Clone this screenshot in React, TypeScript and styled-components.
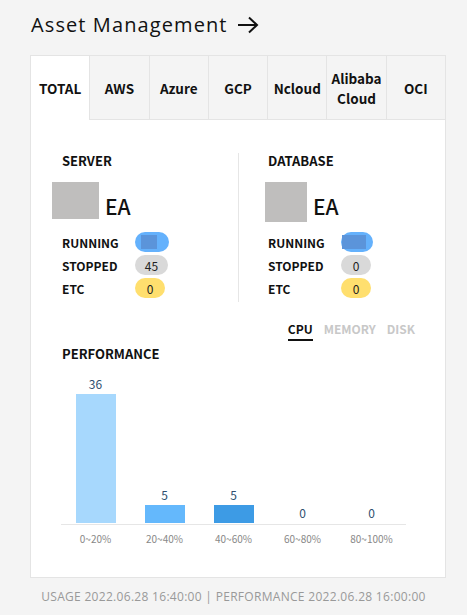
import React from "react";
import styled, { createGlobalStyle } from "styled-components";

const Global = createGlobalStyle`
  html, body { margin: 0; padding: 0; background: #f4f4f4; }
  body { font-family: "Noto Sans CJK KR", "Noto Sans", sans-serif; color: #111; }
  * { box-sizing: border-box; }
`;

const Page = styled.div`
  width: 467px;
  height: 615px;
  padding: 13px 21px 0 30px;
  background: #f4f4f4;
`;

const Title = styled.h1`
  margin: 0 0 18px 1px;
  height: 24px;
  display: flex;
  align-items: center;
  gap: 9px;
  font-family: "Open Sans", "Liberation Sans", sans-serif;
  font-weight: 400;
  font-size: 20px;
  line-height: 24px;
  color: #111;
  letter-spacing: 1.1px;
`;

const Card = styled.section`
  width: 416px;
  height: 523px;
  background: #fff;
  border: 1px solid #e4e4e4;
  display: flex;
  flex-direction: column;
`;

const TabBar = styled.div`
  display: flex;
  height: 64px;
  flex: none;
`;

const Tab = styled.div<{ $active?: boolean }>`
  flex: 1;
  display: flex;
  align-items: center;
  justify-content: center;
  text-align: center;
  font-weight: 700;
  font-size: 13.5px;
  line-height: 20px;
  color: #111;
  background: ${(p) => (p.$active ? "#fff" : "#f4f4f4")};
  border-bottom: ${(p) => (p.$active ? "1px solid transparent" : "1px solid #e4e4e4")};
  & + & {
    border-left: 1px solid #e4e4e4;
  }
`;

const Body = styled.div`
  padding: 33px 30px 0 31px;
  display: flex;
  flex-direction: column;
`;

const Summary = styled.div`
  display: grid;
  grid-template-columns: 176px 1fr;
  height: 149px;
`;

const Column = styled.div<{ $divided?: boolean }>`
  display: flex;
  flex-direction: column;
  padding-left: ${(p) => (p.$divided ? "29px" : "0")};
  border-left: ${(p) => (p.$divided ? "1px solid #e6e6e6" : "none")};
`;

const SectionLabel = styled.div`
  font-weight: 700;
  font-size: 13px;
  line-height: 16px;
  color: #111;
`;

const CountRow = styled.div`
  display: flex;
  align-items: flex-end;
  gap: 6px;
  margin-top: 13px;
  height: 40px;
`;

const Redacted = styled.div<{ $w: number; $h: number; $shift: number }>`
  width: ${(p) => p.$w}px;
  height: ${(p) => p.$h}px;
  margin-left: ${(p) => p.$shift}px;
  background: #bfbebd;
  align-self: flex-start;
`;

const EA = styled.span`
  font-size: 21px;
  font-weight: 500;
  line-height: 24px;
  color: #111;
  margin-bottom: 4px;
`;

const StatusList = styled.div`
  display: flex;
  flex-direction: column;
  gap: 3px;
  margin-top: 10px;
`;

const StatusRow = styled.div`
  display: flex;
  align-items: center;
  height: 20px;
`;

const StatusName = styled.span`
  width: 73px;
  font-weight: 700;
  font-size: 12px;
  color: #111;
`;

const Pill = styled.span<{ $tone: "blue" | "gray" | "yellow"; $w: number }>`
  width: ${(p) => p.$w}px;
  height: 20px;
  border-radius: 10px;
  display: inline-flex;
  align-items: center;
  justify-content: center;
  font-size: 12px;
  color: #222;
  background: ${(p) =>
    p.$tone === "blue" ? "#64b1fc" : p.$tone === "gray" ? "#d9d9d9" : "#ffdf6e"};
`;

const PillMask = styled.span<{ $w: number }>`
  width: ${(p) => p.$w}px;
  height: 14px;
  margin-right: 6px;
  background: #5b94da;
`;

const MetricTabs = styled.div`
  display: flex;
  justify-content: flex-end;
  gap: 11px;
  margin-top: 19px;
`;

const MetricTab = styled.span<{ $active?: boolean }>`
  font-weight: 700;
  font-size: 12px;
  line-height: 16px;
  padding-bottom: 2px;
  color: ${(p) => (p.$active ? "#111" : "#c8c8c8")};
  border-bottom: 2px solid ${(p) => (p.$active ? "#111" : "transparent")};
`;

const PerfLabel = styled(SectionLabel)`
  margin-top: 5px;
`;

const Chart = styled.div`
  margin: 14px 0 0 -1px;
  width: 345px;
  display: flex;
  flex-direction: column;
`;

const Plot = styled.div`
  display: grid;
  grid-template-columns: repeat(5, 1fr);
  align-items: end;
  border-bottom: 1px solid #e6e6e6;
  padding-bottom: 1px;
`;

const BarCol = styled.div`
  display: flex;
  flex-direction: column;
  align-items: center;
  gap: 2px;
`;

const BarValue = styled.span`
  font-size: 12px;
  line-height: 16px;
  color: #2f4f6f;
`;

const Bar = styled.div<{ $color: string }>`
  width: 40px;
  background: ${(p) => p.$color};
`;

const Axis = styled.div`
  display: grid;
  grid-template-columns: repeat(5, 1fr);
  margin-top: 6px;
`;

const AxisLabel = styled.span`
  text-align: center;
  font-size: 10px;
  line-height: 16px;
  color: #888;
`;

const Footer = styled.div`
  margin: 11px 0 0 -9px;
  width: 425px;
  text-align: center;
  font-family: "Open Sans", "Liberation Sans", sans-serif;
  font-size: 12px;
  line-height: 16px;
  letter-spacing: 0.3px;
  color: #999;
`;

const Arrow = () => (
  <svg width="22" height="18" viewBox="0 0 22 18" fill="none" stroke="#111" strokeWidth="2">
    <path d="M1 9h19M12 1.5L20 9l-8 7.5" />
  </svg>
);

const tabs = ["TOTAL", "AWS", "Azure", "GCP", "Ncloud", "Alibaba Cloud", "OCI"];

const bars = [
  { label: "0~20%", value: 36, color: "#a7d8fd" },
  { label: "20~40%", value: 5, color: "#64b8fc" },
  { label: "40~60%", value: 5, color: "#3d9be5" },
  { label: "60~80%", value: 0, color: "#3d9be5" },
  { label: "80~100%", value: 0, color: "#3d9be5" },
];

type Stat = { name: string; tone: "blue" | "gray" | "yellow"; value?: string; w: number; mask?: number };

const groups: { title: string; box: [number, number, number]; stats: Stat[] }[] = [
  {
    title: "SERVER",
    box: [47, 37, -10],
    stats: [
      { name: "RUNNING", tone: "blue", w: 34, mask: 16 },
      { name: "STOPPED", tone: "gray", value: "45", w: 33 },
      { name: "ETC", tone: "yellow", value: "0", w: 30 },
    ],
  },
  {
    title: "DATABASE",
    box: [42, 40, -3],
    stats: [
      { name: "RUNNING", tone: "blue", w: 32, mask: 24 },
      { name: "STOPPED", tone: "gray", value: "0", w: 30 },
      { name: "ETC", tone: "yellow", value: "0", w: 30 },
    ],
  },
];

export default function App() {
  return (
    <Page>
      <Global />
      <Title>
        Asset Management <Arrow />
      </Title>
      <Card>
        <TabBar>
          {tabs.map((t, i) => (
            <Tab key={t} $active={i === 0}>
              {t === "Alibaba Cloud" ? (
                <span>
                  Alibaba
                  <br />
                  Cloud
                </span>
              ) : (
                t
              )}
            </Tab>
          ))}
        </TabBar>
        <Body>
          <Summary>
            {groups.map((g, gi) => (
              <Column key={g.title} $divided={gi === 1}>
                <SectionLabel>{g.title}</SectionLabel>
                <CountRow>
                  <Redacted $w={g.box[0]} $h={g.box[1]} $shift={g.box[2]} />
                  <EA>EA</EA>
                </CountRow>
                <StatusList>
                  {g.stats.map((s) => (
                    <StatusRow key={s.name}>
                      <StatusName>{s.name}</StatusName>
                      <Pill $tone={s.tone} $w={s.w}>
                        {s.mask ? <PillMask $w={s.mask} /> : s.value}
                      </Pill>
                    </StatusRow>
                  ))}
                </StatusList>
              </Column>
            ))}
          </Summary>
          <MetricTabs>
            <MetricTab $active>CPU</MetricTab>
            <MetricTab>MEMORY</MetricTab>
            <MetricTab>DISK</MetricTab>
          </MetricTabs>
          <PerfLabel>PERFORMANCE</PerfLabel>
          <Chart>
            <Plot>
              {bars.map((b) => (
                <BarCol key={b.label}>
                  <BarValue>{b.value}</BarValue>
                  <Bar $color={b.color} style={{ height: `${Math.round(b.value * 3.58)}px` }} />
                </BarCol>
              ))}
            </Plot>
            <Axis>
              {bars.map((b) => (
                <AxisLabel key={b.label}>{b.label}</AxisLabel>
              ))}
            </Axis>
          </Chart>
        </Body>
      </Card>
      <Footer>USAGE 2022.06.28 16:40:00 | PERFORMANCE 2022.06.28 16:00:00</Footer>
    </Page>
  );
}
